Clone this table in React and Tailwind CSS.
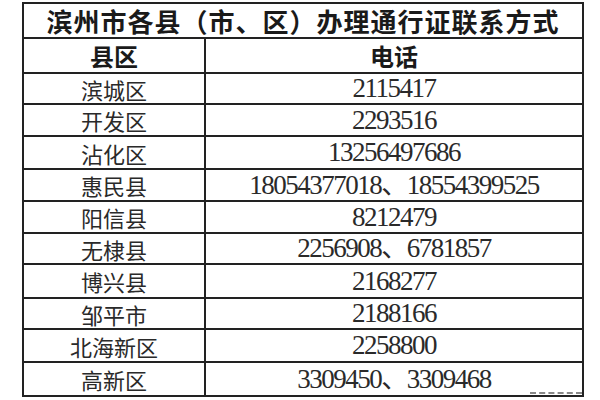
const rows = [
  ["滨城区", "2115417", "h-[31px]"],
  ["开发区", "2293516", "h-[32px]"],
  ["沾化区", "13256497686", "h-[33px]"],
  ["惠民县", "18054377018、18554399525", "h-[32px]"],
  ["阳信县", "8212479", "h-[32px]"],
  ["无棣县", "2256908、6781857", "h-[31px]"],
  ["博兴县", "2168277", "h-[34px]"],
  ["邹平市", "2188166", "h-[31px]"],
  ["北海新区", "2258800", "h-[33px]"],
  ["高新区", "3309450、3309468", "h-[32px]"],
];

export default function App() {
  return (
    <div className="w-[600px] h-[400px] bg-white overflow-hidden relative">
      <div className="ml-[22px] mt-[2px] w-[562px] border-2 border-[#222] text-[#1a1a1a]">
        {/* title */}
        <div className="h-[35px] border-b-2 border-[#222] flex items-center justify-center font-['Noto_Sans_CJK_SC',sans-serif] text-[26px] font-bold leading-none tracking-[1px]">
          滨州市各县（市、区）办理通行证联系方式
        </div>
        {/* header */}
        <div className="h-[35px] border-b-2 border-[#222] flex">
          <div className="w-[182px] border-r-2 border-[#222] flex items-center justify-center font-['Noto_Sans_CJK_SC',sans-serif] text-[24px] font-bold leading-none">
            县区
          </div>
          <div className="flex-1 flex items-center justify-center font-['Noto_Sans_CJK_SC',sans-serif] text-[24px] font-bold leading-none">
            电话
          </div>
        </div>
        {rows.map(([area, phone, h], i) => (
          <div
            key={area}
            className={`${h} flex ${i < rows.length - 1 ? "border-b-2 border-[#222]" : ""}`}
          >
            <div className="w-[182px] border-r-2 border-[#222] flex items-center justify-center font-['Noto_Sans_CJK_SC',sans-serif] text-[22px] leading-none text-[#2a2a2a]">
              {area}
            </div>
            <div className="flex-1 flex items-center justify-center font-['Liberation_Serif','Noto_Sans_CJK_SC',serif] text-[27px] tracking-[-1.5px] leading-none text-[#2a2a2a]">
              {phone}
            </div>
          </div>
        ))}
      </div>
      <div className="absolute left-[530px] top-[392px] w-[52px] border-t-2 border-dashed border-[#888]" />
    </div>
  );
}
